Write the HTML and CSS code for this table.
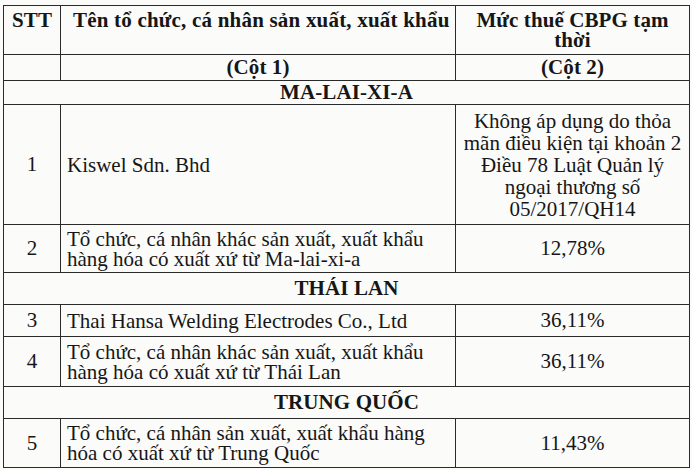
FILE: index.html
```html
<!DOCTYPE html>
<html lang="vi">
<head>
<meta charset="utf-8">
<title>Mức thuế CBPG tạm thời</title>
<link rel="stylesheet" href="styles.css">
</head>
<body>
<table class="tbl">
  <colgroup>
    <col class="c-stt">
    <col class="c-name">
    <col class="c-rate">
  </colgroup>
  <tr class="r-head">
    <th class="h-stt">STT</th>
    <th class="h-name">Tên tổ chức, cá nhân sản xuất, xuất khẩu</th>
    <th class="h-rate">Mức thuế CBPG tạm thời</th>
  </tr>
  <tr class="r-col">
    <th></th>
    <th>(Cột 1)</th>
    <th>(Cột 2)</th>
  </tr>
  <tr class="r-country r-ma">
    <th colspan="3">MA-LAI-XI-A</th>
  </tr>
  <tr class="r-1">
    <td class="stt">1</td>
    <td class="name">Kiswel Sdn. Bhd</td>
    <td class="rate rate-long">Không áp dụng do thỏa mãn điều kiện tại khoản 2 Điều 78 Luật Quản lý ngoại thương số 05/2017/QH14</td>
  </tr>
  <tr class="r-2">
    <td class="stt">2</td>
    <td class="name">Tổ chức, cá nhân khác sản xuất, xuất khẩu hàng hóa có xuất xứ từ Ma-lai-xi-a</td>
    <td class="rate">12,78%</td>
  </tr>
  <tr class="r-country r-th">
    <th colspan="3">THÁI LAN</th>
  </tr>
  <tr class="r-3">
    <td class="stt">3</td>
    <td class="name">Thai Hansa Welding Electrodes Co., Ltd</td>
    <td class="rate">36,11%</td>
  </tr>
  <tr class="r-4">
    <td class="stt">4</td>
    <td class="name">Tổ chức, cá nhân khác sản xuất, xuất khẩu hàng hóa có xuất xứ từ Thái Lan</td>
    <td class="rate">36,11%</td>
  </tr>
  <tr class="r-country r-cn">
    <th colspan="3">TRUNG QUỐC</th>
  </tr>
  <tr class="r-5">
    <td class="stt">5</td>
    <td class="name">Tổ chức, cá nhân sản xuất, xuất khẩu hàng hóa có xuất xứ từ Trung Quốc</td>
    <td class="rate">11,43%</td>
  </tr>
</table>
</body>
</html>
```

FILE: styles.css
```css
html, body {
  margin: 0;
  padding: 0;
  background: #fbfbfa;
}

body {
  padding: 5px 0 0 3px;
  font-family: "Liberation Serif", "Times New Roman", serif;
  color: #161616;
}

.tbl {
  border-collapse: collapse;
  table-layout: fixed;
  width: 686px;
  font-size: 21px;
  line-height: 21px;
}

.c-stt { width: 57px; }
.c-name { width: 395px; }
.c-rate { width: 234px; }

.tbl th,
.tbl td {
  border: 1px solid #2a2a2a;
  padding: 0;
}

.tbl th {
  font-weight: bold;
  text-align: center;
  vertical-align: middle;
  letter-spacing: 0.1px;
}

.r-head th {
  vertical-align: top;
  padding-top: 4px;
  line-height: 20px;
}

.r-head .h-name {
  text-align: left;
  padding-left: 12px;
  letter-spacing: 0.2px;
}

.r-head .h-rate {
  padding-left: 16px;
  padding-right: 16px;
}

.r-head { height: 49px; }
.r-col { height: 26px; }
.r-country { height: 24px; }
.r-th, .r-cn { height: 32px; }

.tbl td {
  vertical-align: middle;
}

.stt {
  text-align: center;
}

.name {
  text-align: left;
  padding-left: 6px !important;
  padding-right: 2px !important;
  line-height: 20px;
}

.rate {
  text-align: center;
  padding: 0 6px !important;
}

.rate-long {
  line-height: 22px;
}

.r-1 { height: 120px; }
.r-2 { height: 48px; }
.r-3 { height: 32px; }
.r-4 { height: 50px; }
.r-5 { height: 49px; }
```
